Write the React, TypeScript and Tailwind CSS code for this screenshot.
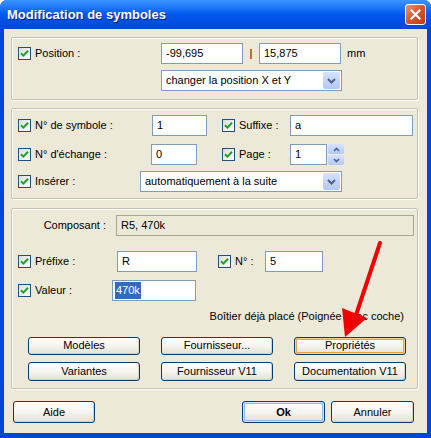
import React from "react";

const FONT = { fontFamily: '"Liberation Sans", Arial, sans-serif' };

const FIELD = "h-[21px] border border-[#7F9DB9] bg-white px-[4px] flex items-center text-[11px] text-black";
const BTN =
  "flex items-center justify-center rounded-[3px] border border-[#003C74] bg-gradient-to-b from-white via-[#F5F4EF] to-[#E3E1D6] text-[11px] text-black shadow-[inset_-1px_-1px_0_#D6D0C5]";

function Check() {
  return (
    <span className="flex h-[13px] w-[13px] shrink-0 items-center justify-center border border-[#1C5180] bg-gradient-to-br from-[#DCDCD7] to-white">
      <svg width="9" height="9" viewBox="0 0 9 9">
        <path d="M1 4.2 L3.4 6.6 L8 1.8" fill="none" stroke="#21A121" strokeWidth="2" />
      </svg>
    </span>
  );
}

function CheckLabel({ label, w }: { label: string; w: string }) {
  return (
    <div className={`flex items-center gap-[4px] ${w}`}>
      <Check />
      <span className="text-[11px] text-black">{label}</span>
    </div>
  );
}

function DropArrow() {
  return (
    <span className="flex h-[17px] w-[17px] items-center justify-center rounded-[2px] bg-gradient-to-b from-[#D6E3FD] to-[#B4C8F6]">
      <svg width="9" height="6" viewBox="0 0 9 6">
        <path d="M1 1 L4.5 4.5 L8 1" fill="none" stroke="#4D6185" strokeWidth="2" />
      </svg>
    </span>
  );
}

function Select({ value, w }: { value: string; w: string }) {
  return (
    <div className={`flex h-[21px] items-center justify-between border border-[#7F9DB9] bg-white pl-[4px] pr-[1px] ${w}`}>
      <span className="text-[11px] text-black">{value}</span>
      <DropArrow />
    </div>
  );
}

function Group({ children, cls }: { children: React.ReactNode; cls: string }) {
  return (
    <div className={`mx-[7px] w-[407px] rounded-[2px] border border-[#C5C2B2] shadow-[inset_1px_1px_0_white,1px_1px_0_white] ${cls}`}>
      {children}
    </div>
  );
}

export default function App() {
  return (
    <div style={FONT} className="relative h-[438px] w-[431px] overflow-hidden rounded-t-[7px] bg-[#0046D5]">
      {/* title bar */}
      <div className="flex h-[29px] items-center justify-between bg-gradient-to-b from-[#3D95FF] via-[#0058EE] to-[#0046D8] pl-[7px] pr-[5px]">
        <span className="text-[13px] font-bold text-white [text-shadow:1px_1px_0_#0A1F7A]">Modification de symboles</span>
        <span className="flex h-[21px] w-[21px] items-center justify-center rounded-[3px] border border-white bg-gradient-to-br from-[#E8906F] via-[#D9552C] to-[#C13B16]">
          <svg width="11" height="11" viewBox="0 0 11 11">
            <path d="M1.5 1.5 L9.5 9.5 M9.5 1.5 L1.5 9.5" stroke="white" strokeWidth="2.2" strokeLinecap="square" />
          </svg>
        </span>
      </div>

      {/* client */}
      <div className="mx-[4px] h-[404px] bg-[#ECE9D8] pt-[8px]">
        <Group cls="h-[63px] pl-[6px] pt-[5px]">
          <div className="flex h-[21px] items-center">
            <CheckLabel label="Position :" w="w-[143px]" />
            <div className={`${FIELD} w-[82px]`}>-99,695</div>
            <span className="w-[16px] text-center text-[11px]">|</span>
            <div className={`${FIELD} w-[82px]`}>15,875</div>
            <span className="ml-[6px] text-[11px]">mm</span>
          </div>
          <div className="mt-[6px] flex">
            <div className="w-[143px]" />
            <Select value="changer la position X et Y" w="w-[181px]" />
          </div>
        </Group>

        <Group cls="mt-[8px] h-[91px] pl-[6px] pt-[6px]">
          <div className="flex h-[21px] items-center">
            <CheckLabel label="N° de symbole :" w="w-[134px]" />
            <div className={`${FIELD} w-[55px]`}>1</div>
            <div className="w-[15px]" />
            <CheckLabel label="Suffixe :" w="w-[68px]" />
            <div className={`${FIELD} w-[123px]`}>a</div>
          </div>
          <div className="mt-[8px] flex h-[21px] items-center">
            <CheckLabel label="N° d'échange :" w="w-[133px]" />
            <div className={`${FIELD} w-[46px]`}>0</div>
            <div className="w-[25px]" />
            <CheckLabel label="Page :" w="w-[68px]" />
            <div className={`${FIELD} w-[37px]`}>1</div>
            <div className="ml-[1px] flex h-[21px] w-[16px] flex-col gap-[1px]">
              <span className="flex flex-1 items-center justify-center rounded-[2px] bg-gradient-to-b from-[#D6E3FD] to-[#B4C8F6]">
                <svg width="7" height="5" viewBox="0 0 7 5"><path d="M1 4 L3.5 1.5 L6 4" fill="none" stroke="#4D6185" strokeWidth="1.6" /></svg>
              </span>
              <span className="flex flex-1 items-center justify-center rounded-[2px] bg-gradient-to-b from-[#D6E3FD] to-[#B4C8F6]">
                <svg width="7" height="5" viewBox="0 0 7 5"><path d="M1 1 L3.5 3.5 L6 1" fill="none" stroke="#4D6185" strokeWidth="1.6" /></svg>
              </span>
            </div>
          </div>
          <div className="mt-[6px] flex h-[21px] items-center">
            <CheckLabel label="Insérer :" w="w-[122px]" />
            <Select value="automatiquement à la suite" w="w-[202px]" />
          </div>
        </Group>

        <Group cls="mt-[9px] h-[181px] pl-[6px] pt-[6px]">
          <div className="flex h-[21px] items-center">
            <span className="w-[89px] pr-[1px] text-right text-[11px]">Composant :</span>
            <div className="ml-[9px] flex h-[21px] w-[298px] items-center border border-[#A5A597] bg-[#ECE9D8] px-[4px] text-[11px]">R5, 470k</div>
          </div>
          <div className="mt-[15px] flex h-[21px] items-center">
            <CheckLabel label="Préfixe :" w="w-[99px]" />
            <div className={`${FIELD} w-[80px]`}>R</div>
            <div className="w-[21px]" />
            <CheckLabel label="N° :" w="w-[47px]" />
            <div className={`${FIELD} w-[58px]`}>5</div>
          </div>
          <div className="mt-[8px] flex h-[21px] items-center">
            <CheckLabel label="Valeur :" w="w-[94px]" />
            <div className="flex h-[21px] w-[84px] items-center border border-[#7F9DB9] bg-white px-[2px] text-[11px]">
              <span className="bg-[#316AC5] px-[1px] text-white">470k</span>
            </div>
          </div>
          <div className="mt-[7px] pr-[13px] text-right text-[11px]">Boîtier déjà placé (Poignée avec coche)</div>
          <div className="mt-[12px] flex gap-[21px] pl-[10px]">
            <div className={`${BTN} h-[18px] w-[112px]`}>Modèles</div>
            <div className={`${BTN} h-[18px] w-[112px]`}>Fournisseur...</div>
            <div className={`${BTN} h-[18px] w-[112px] shadow-[inset_0_0_0_1px_#F9D38C,inset_0_0_0_2px_#E8A43B]`}>Propriétés</div>
          </div>
          <div className="mt-[7px] flex gap-[21px] pl-[10px]">
            <div className={`${BTN} h-[19px] w-[112px]`}>Variantes</div>
            <div className={`${BTN} h-[19px] w-[112px]`}>Fournisseur V11</div>
            <div className={`${BTN} h-[19px] w-[112px]`}>Documentation V11</div>
          </div>
        </Group>

        <div className="mt-[12px] flex items-center pl-[9px]">
          <div className={`${BTN} h-[22px] w-[82px]`}>Aide</div>
          <div className="w-[147px]" />
          <div className={`${BTN} h-[22px] w-[83px] font-bold shadow-[inset_0_0_0_1px_#CEE7FF,inset_0_0_0_2px_#98B8EA]`}>Ok</div>
          <div className="w-[6px]" />
          <div className={`${BTN} h-[22px] w-[83px]`}>Annuler</div>
        </div>
      </div>

      {/* red annotation arrow */}
      <svg className="pointer-events-none absolute left-0 top-0" width="431" height="438" viewBox="0 0 431 438">
        <path d="M380 243 L355 318" stroke="#F00000" strokeWidth="4" strokeLinecap="round" />
        <path d="M342 308 L367 318 L345 337 Z" fill="#F00000" />
      </svg>
    </div>
  );
}
